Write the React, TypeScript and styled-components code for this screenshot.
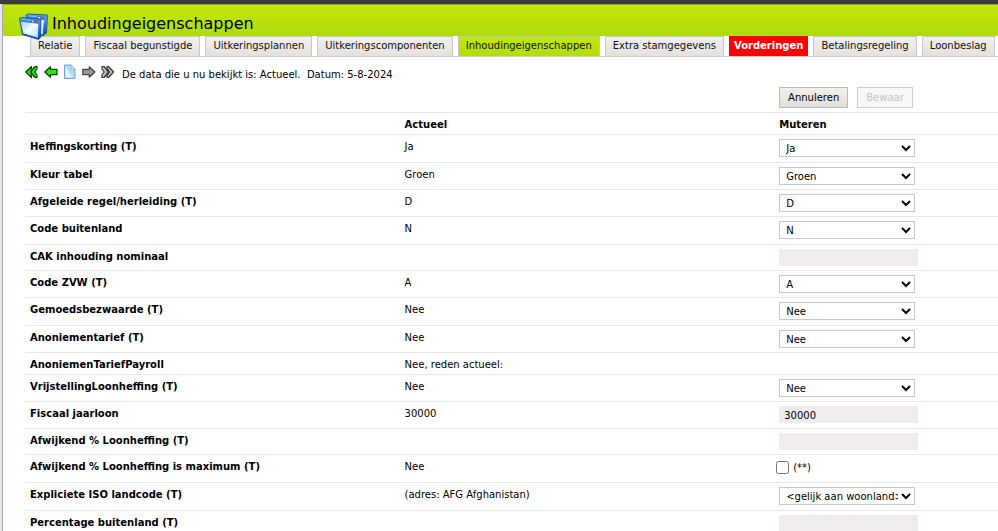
import React from 'react';
import styled, { createGlobalStyle, css } from 'styled-components';

const GlobalStyle = createGlobalStyle`
  *, *::before, *::after { box-sizing: border-box; }
  body {
    margin: 0;
    background: #fff;
    color: #000;
    font: 10px/16px Verdana, "DejaVu Sans", sans-serif;
    overflow: hidden;
  }
  button, input, select { font: inherit; color: inherit; margin: 0; }
`;

const Page = styled.div`
  min-height: 100vh;
  border-top: 4px solid #3b3b3d;
`;

const Frame = styled.div`
  min-height: calc(100vh - 4px);
  border-left: 2px solid #ebe6ee;
`;

const Surface = styled.div`
  min-height: calc(100vh - 4px);
  border-left: 1px solid #a9a6ab;
`;

const Header = styled.header`
  display: flex;
  align-items: flex-start;
  gap: 4px;
  height: 32px;
  padding: 8px 0 0 16px;
  border-top: 1px solid #8fae10;
  background: linear-gradient(#bfe808, #afdb10);
`;

const AppIcon = styled.svg`
  flex: none;
  position: relative;
  z-index: 1;
  width: 29px;
  height: 29px;
`;

const Title = styled.h1`
  margin: 0;
  font-size: 16px;
  line-height: 22px;
  font-weight: normal;
`;

const Tabs = styled.nav`
  display: flex;
  gap: 5px;
  height: 21px;
  margin-left: 22px;
  padding-left: 5px;
  border-bottom: 1px solid #cfcbcf;
`;

const Tab = styled.a<{ $tone?: 'active' | 'alert' }>`
  flex: none;
  padding: 1px 7px 2px;
  border: 1px solid #c9c5c9;
  border-bottom: 0;
  background: linear-gradient(#f2f0ee, #e4e1dd);
  color: #111;
  text-decoration: none;
  white-space: nowrap;
  ${({ $tone }) =>
    $tone === 'active' &&
    css`
      background: linear-gradient(#bfe808, #b2dd0c);
    `}
  ${({ $tone }) =>
    $tone === 'alert' &&
    css`
      padding: 1px 4px 2px;
      border-color: #f00;
      background: #f00;
      color: #fff;
      font-weight: bold;
    `}
`;

const Main = styled.main`
  padding-left: 22px;
`;

const Toolbar = styled.div`
  display: flex;
  align-items: center;
  gap: 5px;
  height: 22px;
  margin-top: 4px;
`;

const NavButton = styled.button`
  flex: none;
  width: 14px;
  height: 16px;
  padding: 0;
  border: 0;
  background: none;

  svg { display: block; width: 100%; height: 100%; }
`;

const Status = styled.p`
  margin: 6px 0 0 2px;
  white-space: pre;
`;

const Actions = styled.div`
  display: flex;
  gap: 9px;
  margin-left: 77.5%;
  padding: 4px 0;
`;

const Button = styled.button`
  height: 21px;
  padding: 0 8px;
  border: 1px solid #bbb9bb;
  background: linear-gradient(#f2f0ee, #e2dfda);

  &:disabled {
    border-color: #ccc;
    background: #f7f7f7;
    color: #c6c6c6;
  }
`;

const Table = styled.table`
  width: 100%;
  table-layout: fixed;
  border-collapse: collapse;
  text-align: left;
`;

const Column = styled.col<{ $width: string }>`
  width: ${({ $width }) => $width};
`;

const Row = styled.tr<{ $height: number }>`
  height: ${({ $height }) => $height}px;
  border-top: 1px solid #e8e8e8;

  > td, > th {
    padding: 4px 0 0 5px;
    vertical-align: top;
    white-space: nowrap;
  }
`;

const Select = styled.select`
  display: block;
  width: 136px;
  height: 18px;
  padding: 0 0 0 2px;
  border: 1px solid #c8c8c8;
  border-radius: 0;
  background: #fff;
`;

const TextInput = styled.input`
  display: block;
  width: 139px;
  height: 17px;
  padding: 2px 5px 0;
  border: 0;
  background: #efebef;
`;

const CheckLabel = styled.label`
  display: flex;
  align-items: center;
  gap: 4px;
  height: 17px;
  margin-left: -3px;
`;

const Checkbox = styled.input`
  width: 13px;
  height: 13px;
`;

type Field = {
  id: string;
  label: string;
  current?: string;
  kind: 'select' | 'text' | 'check' | 'none';
  value?: string;
  height: number;
};

const fields: Field[] = [
  { id: 'heffingskorting', label: 'Heffingskorting (T)', current: 'Ja', kind: 'select', value: 'Ja', height: 28 },
  { id: 'kleur', label: 'Kleur tabel', current: 'Groen', kind: 'select', value: 'Groen', height: 27 },
  { id: 'regel', label: 'Afgeleide regel/herleiding (T)', current: 'D', kind: 'select', value: 'D', height: 27 },
  { id: 'buitenland', label: 'Code buitenland', current: 'N', kind: 'select', value: 'N', height: 28 },
  { id: 'cak', label: 'CAK inhouding nominaal', kind: 'text', height: 26 },
  { id: 'zvw', label: 'Code ZVW (T)', current: 'A', kind: 'select', value: 'A', height: 27 },
  { id: 'gemoed', label: 'Gemoedsbezwaarde (T)', current: 'Nee', kind: 'select', value: 'Nee', height: 28 },
  { id: 'anoniem', label: 'Anoniementarief (T)', current: 'Nee', kind: 'select', value: 'Nee', height: 27 },
  { id: 'payroll', label: 'AnoniemenTariefPayroll', current: 'Nee, reden actueel:', kind: 'none', height: 22 },
  { id: 'vrijstelling', label: 'VrijstellingLoonheffing (T)', current: 'Nee', kind: 'select', value: 'Nee', height: 27 },
  { id: 'jaarloon', label: 'Fiscaal jaarloon', current: '30000', kind: 'text', value: '30000', height: 27 },
  { id: 'afwijkend', label: 'Afwijkend % Loonheffing (T)', kind: 'text', height: 26 },
  { id: 'maximum', label: 'Afwijkend % Loonheffing is maximum (T)', current: 'Nee', kind: 'check', value: '(**)', height: 28 },
  { id: 'iso', label: 'Expliciete ISO landcode (T)', current: '(adres: AFG Afghanistan)', kind: 'select', value: '<gelijk aan woonland>', height: 28 },
  { id: 'percentage', label: 'Percentage buitenland (T)', kind: 'text', height: 26 },
];

const tabs: { label: string; tone?: 'active' | 'alert' }[] = [
  { label: 'Relatie' },
  { label: 'Fiscaal begunstigde' },
  { label: 'Uitkeringsplannen' },
  { label: 'Uitkeringscomponenten' },
  { label: 'Inhoudingeigenschappen', tone: 'active' },
  { label: 'Extra stamgegevens' },
  { label: 'Vorderingen', tone: 'alert' },
  { label: 'Betalingsregeling' },
  { label: 'Loonbeslag' },
];

const WindowsIcon = () => (
  <AppIcon viewBox="0 0 29 29" aria-hidden="true">
    <defs>
      <linearGradient id="pane" x1="0" y1="0" x2="1" y2="1">
        <stop offset="0" stopColor="#9fd0f2" />
        <stop offset="0.5" stopColor="#f6fcff" />
        <stop offset="1" stopColor="#b4dcf6" />
      </linearGradient>
      <linearGradient id="side" x1="0" y1="0" x2="0" y2="1">
        <stop offset="0" stopColor="#5aa2ea" />
        <stop offset="1" stopColor="#0b48ac" />
      </linearGradient>
    </defs>
    <path d="M7 2 9 1 28.500 2 27.500 20 23.500 23 9 19Z" fill="url(#side)" stroke="#0f4595" strokeWidth="0.8" />
    <path d="M8.500 5 25 6.500 24 21.500 10 18Z" fill="url(#pane)" />
    <path d="M7.500 2.300 25.500 3.800 25 7 8 5Z" fill="#2a84e0" />
    <path d="M25.500 3.800 28.300 2.200 27.300 19.800 23.800 22.800Z" fill="url(#side)" />
    <path d="M.500 5.500 2.500 4.500 22 6.500 21.500 24.500 19.500 26.500 3.500 21.500Z" fill="url(#side)" stroke="#0f4595" strokeWidth="0.8" />
    <path d="M1.700 8.500 19.300 10.500 18.800 24.800 4.300 20.300Z" fill="url(#pane)" />
    <path d="M1 5.700 19.800 7.600 19.500 10.700 1.500 8.500Z" fill="#2a84e0" />
    <path d="M2 6.300 12 7.300M9 2.900 18 3.700" stroke="#9bcef8" strokeWidth="0.8" />
    <rect x="15.500" y="7.700" width="2.500" height="2" fill="#ee3a2a" />
    <rect x="22" y="4" width="2.500" height="2" fill="#ee3a2a" />
    <path d="M13 8.300h1.500M19.500 4.700h1.500" stroke="#e4f4ff" strokeWidth="1.200" />
  </AppIcon>
);

const FirstIcon = () => (
  <svg viewBox="0 0 14 16" aria-hidden="true">
    <path d="M6.500 2.500 0.800 8 6.500 13.500Z" fill="#27e80c" stroke="#0a3a04" strokeWidth="1.200" strokeLinejoin="round" />
    <path d="M10 2.500H12V5L9.800 8 12 11V13.500H10L5.500 8Z" fill="#27e80c" stroke="#0a3a04" strokeWidth="1.200" strokeLinejoin="round" />
  </svg>
);

const PreviousIcon = () => (
  <svg viewBox="0 0 14 16" aria-hidden="true">
    <path d="M0.800 8 6.500 2.800V5.300H13V10.700H6.500V13.200Z" fill="#27e80c" stroke="#0a3a04" strokeWidth="1.200" strokeLinejoin="round" />
  </svg>
);

const DocumentIcon = () => (
  <svg viewBox="0 0 14 16" aria-hidden="true">
    <path d="M1.500 1H8L12 5V14.500H1.500Z" fill="#b5daf8" stroke="#6da9de" strokeWidth="1" />
    <path d="M2.500 13.500V2.500L9.500 13.500Z" fill="#e2f2ff" />
    <path d="M8 1V5H12Z" fill="#fff" stroke="#6da9de" strokeWidth="0.800" />
  </svg>
);

const NextIcon = () => (
  <svg viewBox="0 0 14 16" aria-hidden="true">
    <path d="M13 8 7.300 2.800V5.300H0.800V10.700H7.300V13.200Z" fill="#959595" stroke="#444" strokeWidth="1.200" strokeLinejoin="round" />
  </svg>
);

const LastIcon = () => (
  <svg viewBox="0 0 14 16" aria-hidden="true">
    <path d="M1 2.500H3L7.500 8 3 13.500H1V11L3.200 8 1 5Z" fill="#c4c4c4" stroke="#333" strokeWidth="1.200" strokeLinejoin="round" />
    <path d="M6 2.500H7.500L12.500 8 7.500 13.500H6V11.500L8.500 8 6 4.500Z" fill="#c4c4c4" stroke="#333" strokeWidth="1.200" strokeLinejoin="round" />
  </svg>
);

const navigation = [
  { name: 'Eerste', Icon: FirstIcon },
  { name: 'Vorige', Icon: PreviousIcon },
  { name: 'Actueel', Icon: DocumentIcon },
  { name: 'Volgende', Icon: NextIcon },
  { name: 'Laatste', Icon: LastIcon },
];

const FieldControl = ({ id, kind, value }: Field) => {
  switch (kind) {
    case 'select':
      return (
        <Select id={id} defaultValue={value}>
          <option>{value}</option>
        </Select>
      );
    case 'text':
      return <TextInput id={id} type="text" defaultValue={value} />;
    case 'check':
      return (
        <CheckLabel>
          <Checkbox id={id} type="checkbox" />
          {value}
        </CheckLabel>
      );
    default:
      return null;
  }
};

export default function App() {
  return (
    <Page>
      <GlobalStyle />
      <Frame>
        <Surface>
          <Header>
            <WindowsIcon />
            <Title>Inhoudingeigenschappen</Title>
          </Header>
          <Tabs>
            {tabs.map(({ label, tone }) => (
              <Tab key={label} href="#" $tone={tone} aria-current={tone === 'active' ? 'page' : undefined}>
                {label}
              </Tab>
            ))}
          </Tabs>
          <Main>
            <Toolbar>
              {navigation.map(({ name, Icon }) => (
                <NavButton key={name} type="button" aria-label={name}>
                  <Icon />
                </NavButton>
              ))}
              <Status>{'De data die u nu bekijkt is: Actueel.  Datum: 5-8-2024'}</Status>
            </Toolbar>
            <Actions>
              <Button type="button">Annuleren</Button>
              <Button type="button" disabled>Bewaar</Button>
            </Actions>
            <Table>
              <colgroup>
                <Column $width="38.5%" />
                <Column $width="38.5%" />
                <Column $width="23%" />
              </colgroup>
              <thead>
                <Row $height={22}>
                  <td />
                  <th scope="col">Actueel</th>
                  <th scope="col">Muteren</th>
                </Row>
              </thead>
              <tbody>
                {fields.map((field) => (
                  <Row key={field.id} $height={field.height}>
                    <th scope="row">
                      {field.kind === 'none' ? field.label : <label htmlFor={field.id}>{field.label}</label>}
                    </th>
                    <td>{field.current}</td>
                    <td>
                      <FieldControl {...field} />
                    </td>
                  </Row>
                ))}
              </tbody>
            </Table>
          </Main>
        </Surface>
      </Frame>
    </Page>
  );
}
